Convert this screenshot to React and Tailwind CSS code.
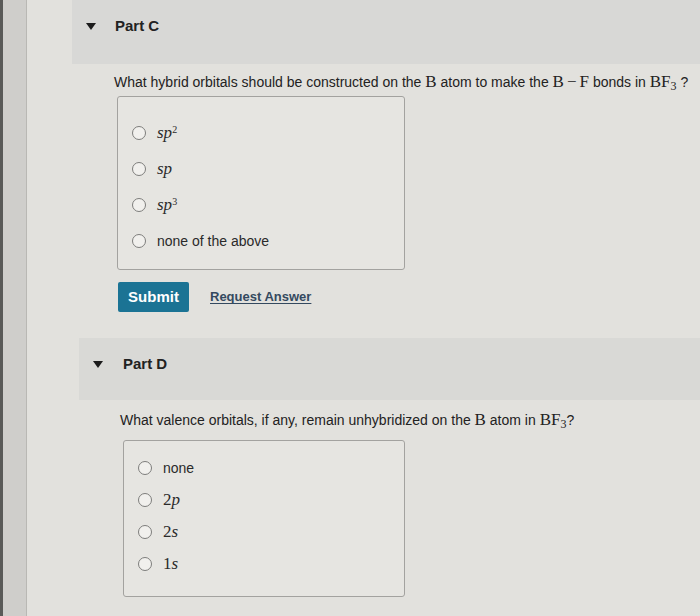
export default function App() {
  const sans = { fontFamily: '"Liberation Sans", Arial, sans-serif' };

  const Radio = () => (
    <span className="inline-block w-[14px] h-[14px] rounded-full border-[1.5px] border-[#7d7d7b] bg-[#f1f0ed] shrink-0" />
  );

  const Caret = () => (
    <svg width="10" height="7" viewBox="0 0 10 7" className="shrink-0">
      <polygon points="0,0 10,0 5,7" fill="#1c1c1c" />
    </svg>
  );

  const M = ({ children, italic }) => (
    <span
      className={`text-[17px] ${italic ? "italic" : ""}`}
      style={{ fontFamily: '"Liberation Serif", "DejaVu Serif", serif' }}
    >
      {children}
    </span>
  );

  const Option = ({ children }) => (
    <div className="flex items-center gap-[11px] h-[20px]">
      <Radio />
      <span className="text-[14px] text-[#2a2a2a]">{children}</span>
    </div>
  );

  return (
    <div className="flex w-[700px] h-[616px] overflow-hidden bg-[#e2e1dd] text-[#222]" style={sans}>
      <div className="w-[3px] bg-[#5a5a58]" />
      <div className="w-[24px] bg-[#cfcecb] border-r border-[#b9b8b4]" />
      <div className="flex-1 flex flex-col">
        {/* Part C */}
        <section className="ml-[45px]">
          <div className="h-[64px] bg-[#d8d8d6] flex items-start pt-[16px] pl-[14px] gap-[19px]">
            <div className="h-[20px] flex items-center">
              <Caret />
            </div>
            <span className="text-[15px] leading-[20px] font-semibold">Part C</span>
          </div>
          <div className="pl-[42px]">
            <p className="mt-[8px] text-[14px] leading-[20px] whitespace-nowrap">
              What hybrid orbitals should be constructed on the <M>B</M> atom to make the{" "}
              <M>
                B<span className="mx-[3px]">−</span>F
              </M>{" "}
              bonds in{" "}
              <M>
                BF<sub className="text-[12px]">3</sub>
              </M>{" "}
              ?
            </p>
            <div className="mt-[4px] ml-[3px] w-[288px] border border-[#a3a29f] rounded-[3px] bg-[#e6e5e1] pl-[14px] pt-[26px] pb-[18px] flex flex-col gap-[16px]">
              <Option>
                <M italic>
                  sp<sup className="text-[10px] not-italic">2</sup>
                </M>
              </Option>
              <Option>
                <M italic>sp</M>
              </Option>
              <Option>
                <M italic>
                  sp<sup className="text-[10px] not-italic">3</sup>
                </M>
              </Option>
              <Option>none of the above</Option>
            </div>
            <div className="mt-[12px] ml-[4px] flex items-center gap-[21px]">
              <button className="w-[71px] h-[30px] rounded-[2px] bg-[#1b7394] text-white text-[15px] font-bold">
                Submit
              </button>
              <a className="text-[13px] font-bold text-[#34495f] underline underline-offset-2">
                Request Answer
              </a>
            </div>
          </div>
        </section>

        {/* Part D */}
        <section className="ml-[52px] mt-[26px]">
          <div className="h-[62px] bg-[#d9d9d6] flex items-start pt-[16px] pl-[14px] gap-[20px]">
            <div className="h-[20px] flex items-center">
              <Caret />
            </div>
            <span className="text-[15px] leading-[20px] font-semibold">Part D</span>
          </div>
          <div className="pl-[41px]">
            <p className="mt-[10px] text-[14px] leading-[20px] whitespace-nowrap">
              What valence orbitals, if any, remain unhybridized on the <M>B</M> atom in{" "}
              <M>
                BF<sub className="text-[12px]">3</sub>
              </M>
              ?
            </p>
            <div className="mt-[10px] ml-[3px] w-[282px] border border-[#a3a29f] rounded-[3px] bg-[#e6e5e1] pl-[14px] pt-[17px] pb-[22px] flex flex-col gap-[12px]">
              <Option>none</Option>
              <Option>
                <M>
                  2<i>p</i>
                </M>
              </Option>
              <Option>
                <M>
                  2<i>s</i>
                </M>
              </Option>
              <Option>
                <M>
                  1<i>s</i>
                </M>
              </Option>
            </div>
          </div>
        </section>
      </div>
    </div>
  );
}
